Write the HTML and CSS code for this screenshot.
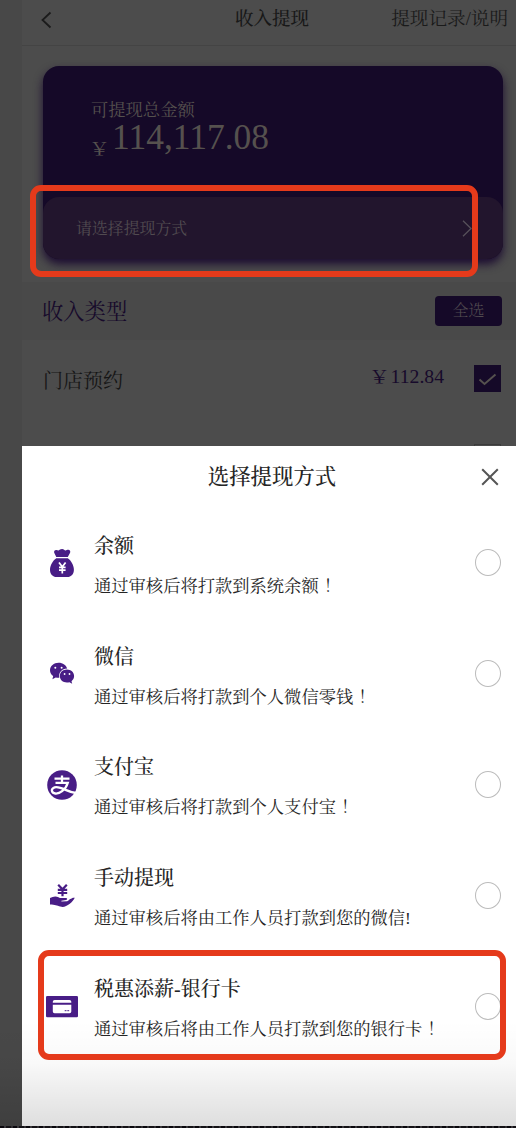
FILE: index.html
```html
<!DOCTYPE html>
<html lang="zh-CN">
<head>
<meta charset="utf-8">
<title>收入提现</title>
<link rel="stylesheet" href="styles.css">
</head>
<body>
<div class="screen">
  <div class="page">
    <header class="nav">
      <svg class="back" width="12" height="18" viewBox="0 0 12 18"><path d="M9.5 1.5 1.5 9l8 7.5"/></svg>
      <h1 class="nav-title">收入提现</h1>
      <span class="nav-link">提现记录/说明</span>
    </header>
    <section class="card">
      <div class="balance">
        <div class="balance-label">可提现总金额</div>
        <div class="balance-row"><span class="yen">￥</span><span class="amount">114,117.08</span></div>
      </div>
      <div class="method">
        <span>请选择提现方式</span>
        <svg width="10" height="17" viewBox="0 0 10 17"><path d="M1 .8 9 8.5 1 16.2"/></svg>
      </div>
    </section>
    <div class="type-bar">
      <h2 class="type-title">收入类型</h2>
      <span class="all">全选</span>
    </div>
    <div class="type-row">
      <span class="type-name">门店预约</span>
      <span class="type-price"><span class="price-yen">￥</span><span>112.84</span></span>
      <span class="check"><svg width="27" height="27" viewBox="0 0 27 27"><path d="m5.500 14.500 5 4.500 11-9.500"/></svg></span>
    </div>
    <div class="type-row next"><span class="check empty"></span></div>
  </div>

  <section class="sheet">
    <header class="sheet-head">
      <h2>选择提现方式</h2>
      <svg class="close" width="18" height="18" viewBox="0 0 18 18"><path d="m1.200 1.200 15.600 15.600M16.800 1.200 1.200 16.800"/></svg>
    </header>
    <ul class="options">
      <li class="option">
        <svg class="icon" width="32" height="32" viewBox="0 0 32 32">
          <path class="fill" d="M10.300 10 8.200 5.800C7.700 4 8.900 2.800 10.400 3c.9.100 1.500.5 2.100.4C13.700 3.200 14.200 2 16.100 2c1.800 0 2.300 1.300 3.400 1.400.8.100 1.500-.6 2.800-.6 1.600 0 2.400 1.400 1.800 2.900L21.800 10Z"/>
          <path class="fill" d="M10.300 11.200h11.500c3.300 2.200 6.100 7.200 6.100 11.500 0 4.200-2.600 7.300-6.600 7.300H10.700C6.600 30 4 26.900 4 22.700c0-4.300 2.900-9.300 6.300-11.500Z"/>
          <path class="cut" d="m13 15.500 3.300 4.300 3.300-4.300M16.300 19.800v6.600M13 20.300h6.600M13 23.200h6.600"/>
        </svg>
        <div class="info"><h3>余额</h3><p>通过审核后将打款到系统余额<span class="mid">！</span></p></div>
        <span class="radio"></span>
      </li>
      <li class="option">
        <svg class="icon" width="32" height="32" viewBox="0 0 32 32">
          <path class="fill" d="M12.600 4.700C7.800 4.700 4 8 4 12.200c0 2.400 1.200 4.500 3.200 5.900l-.8 3.200 3.300-1.900c1.200.3 2.300.5 3.600.4-1.100-5.300 3-9.300 7.900-9.200-.9-3.400-4.300-5.900-8.600-5.900Z"/>
          <path class="fill" d="M20.900 11.600c-4 0-7.100 2.800-7.100 6.500s3.100 6.500 7.100 6.500c.8 0 1.800-.2 2.600-.4l2.700 1.500-.7-2.500c1.600-1.200 2.600-3 2.600-5.100 0-3.700-3.200-6.500-7.200-6.500Z"/>
          <g class="hole"><circle cx="9.300" cy="9.800" r="1"/><circle cx="15.600" cy="9.800" r="1"/><circle cx="18.600" cy="16" r=".9"/><circle cx="23.500" cy="16" r=".9"/></g>
        </svg>
        <div class="info"><h3>微信</h3><p>通过审核后将打款到个人微信零钱<span class="mid">！</span></p></div>
        <span class="radio"></span>
      </li>
      <li class="option">
        <svg class="icon" width="32" height="32" viewBox="0 0 32 32">
          <circle class="fill" cx="16" cy="16" r="14.800"/>
          <path class="mark" d="M8.500 9.600h15M16 6.500v7.300M9.500 13.800h12.300c-1 3.500-3.100 6.400-5.700 8.400-2.400 1.900-4.700 2.500-6.800 2.300-3.700-.4-4.500-4-1.900-5.600 3.200-2 8 .1 12.200 2 3.300 1.500 6.900 2.800 10.500 3.100"/>
        </svg>
        <div class="info"><h3>支付宝</h3><p>通过审核后将打款到个人支付宝<span class="mid">！</span></p></div>
        <span class="radio"></span>
      </li>
      <li class="option">
        <svg class="icon" width="32" height="32" viewBox="0 0 32 32">
          <path class="coin" d="m12.200 4.800 4.300 4.500 4.300-4.500M16.500 9v7.300M11.800 9.800h9.400M11.800 13h9.400"/>
          <path class="fill" d="M4 18c3-1.700 6-2 8.500-.8 1.200.6 1.900.9 3.500.9h3.900c1.700 0 1.700 1.800.2 2l-4.700.7v.6l5.800-.2c1.200-.2 2-1.400 3-2.100 1.500-1.100 3.200-1.800 4.600-1.300-1.300 2.200-2.800 4.400-5 6-3.400 2.600-6.400 4-9.500 2.800-3.300-1.200-5.300-2.200-10.300-2.200Z"/>
        </svg>
        <div class="info"><h3>手动提现</h3><p>通过审核后将由工作人员打款到您的微信!</p></div>
        <span class="radio"></span>
      </li>
      <li class="option">
        <svg class="icon" width="32" height="32" viewBox="0 0 32 32">
          <rect class="fill" y="5" width="32" height="21.300" rx="1.300"/>
          <path class="hole" d="M8.600 9h14.900q1.800 0 1.800 1.700v1.100H6.800v-1.100Q6.800 9 8.600 9ZM6.800 13.700h18.500v6.700q0 1.800-1.800 1.800H8.600q-1.800 0-1.800-1.800Z"/>
          <path class="dots" d="M18.700 19.700h1.800M21.300 19.700h1.900"/>
        </svg>
        <div class="info"><h3>税惠添薪-银行卡</h3><p>通过审核后将由工作人员打款到您的银行卡<span class="mid">！</span></p></div>
        <span class="radio"></span>
      </li>
    </ul>
  </section>

  <div class="shade"></div>
  <div class="bottom-edge"></div>
  <div class="mark-box mark-method"></div>
  <div class="mark-box mark-bank"></div>
</div>
</body>
</html>
```
FILE: styles.css
```css
* { box-sizing: border-box; margin: 0; padding: 0; }
body {
  width: 516px;
  height: 1128px;
  overflow: hidden;
  font-family: "Liberation Serif", "Songti SC", "Noto Serif CJK SC", "Noto Sans CJK SC", serif;
  font-weight: 400;
  white-space: nowrap;
  -webkit-font-smoothing: antialiased;
}
h1, h2, h3 { font-weight: 400; }
svg { display: block; fill: none; flex: none; }
.screen { position: relative; height: 1128px; padding-left: 22px; background: #484848; overflow: hidden; }
.page { height: 1126px; background: #4c4c4c; }

.nav {
  display: grid;
  grid-template-columns: 1fr auto 1fr;
  align-items: center;
  height: 46px;
  padding: 0 8px 8px 19px;
  border-bottom: 1px solid #444;
}
.back { stroke: #1b1b1b; stroke-width: 1.8; margin-top: 2px; }
.nav-title { font-size: 18.5px; line-height: 24px; color: #181818; margin: 1px 0 0 -5px; font-weight: 500; }
.nav-link { font-size: 18.6px; line-height: 24px; color: #1a1a1a; justify-self: end; margin-top: 1px; }

.card {
  height: 193px;
  margin: 20px 13px 0 21px;
  border-radius: 16px;
  background: #150928;
  box-shadow: 0 5px 10px #1b0b30;
  display: flex;
  flex-direction: column;
}
.balance { height: 131px; padding: 34px 0 0 48px; color: #55514e; }
.balance-label { font-size: 17.3px; line-height: 22px; }
.balance-row { display: flex; align-items: baseline; height: 40px; margin-top: -5px; }
.yen {
  width: 21px;
  font-size: 17px;
  line-height: 40px;
  position: relative;
  top: 6px;
  transform: scaleX(1.25);
  transform-origin: 9px 50%;
}
.amount { font-size: 35.5px; line-height: 40px; }
.method {
  height: 62px;
  padding: 0 31px 0 33px;
  border-radius: 16px;
  background: #22152d;
  color: #514b50;
  font-size: 15.9px;
  display: flex;
  align-items: center;
  justify-content: space-between;
}
.method span { margin-top: -2px; }
.method svg { stroke: #57515a; stroke-width: 1.3; }

.type-bar {
  height: 58px;
  margin-top: 23px;
  padding: 0 14px 0 20px;
  background: #494949;
  display: flex;
  align-items: center;
  justify-content: space-between;
}
.type-title { font-size: 21.3px; line-height: 26px; color: #170a2b; margin-top: 2px; }
.all {
  width: 67px;
  height: 30px;
  border-radius: 4px;
  background: #150928;
  color: #514b50;
  font-size: 16px;
  font-weight: 300;
  line-height: 29px;
  text-align: center;
}
.type-row { display: flex; align-items: center; height: 77px; padding: 0 15px 0 21px; }
.type-name { font-size: 20px; color: #161616; margin-top: 2px; }
.type-price { font-size: 19.7px; line-height: 26px; color: #170a2b; margin: -4px 30px 0 auto; display: flex; align-items: baseline; }
.price-yen { width: 20px; font-size: 17px; transform: scaleX(1.25); transform-origin: 9px 50%; }
.check { width: 27px; height: 27px; background: #150928; }
.check svg { stroke: #55514e; stroke-width: 2; }
.next { justify-content: flex-end; align-items: flex-start; margin-top: 27px; }
.empty { background: none; border: 1px solid #3b3b3b; }

.sheet { position: absolute; left: 22px; top: 446px; width: 494px; height: 680px; background: #fff; color: #252525; }
.sheet-head { display: grid; grid-template-columns: 1fr auto 1fr; align-items: center; height: 60px; padding: 1px 17px 0 23px; }
.sheet-head h2 { grid-column: 2; font-size: 21.4px; line-height: 28px; font-weight: 500; }
.close { justify-self: end; stroke: #555; stroke-width: 2; }
.options { list-style: none; padding-top: 2px; }
.option { display: flex; align-items: center; height: 110.8px; padding: 0 15px 0 24px; }
.icon .fill { fill: #481d86; }
.icon .hole { fill: #fff; }
.icon .cut { stroke: #fff; stroke-width: 1.7; }
.icon .mark { stroke: #fff; stroke-width: 2.3; }
.icon .coin { stroke: #481d86; stroke-width: 2.2; }
.icon .dots { stroke: #481d86; stroke-width: 1; }
.info { margin-left: 16px; padding-top: 4px; flex: 1; }
.info h3 { font-size: 20px; line-height: 30px; font-weight: 500; }
.info p { font-size: 17.3px; line-height: 26px; margin-top: 13px; }
.mid { margin-left: 5px; }
.radio { width: 26px; height: 27px; margin-top: -1px; border: 1px solid #bcbcbc; border-radius: 50%; background: #fff; }

.shade {
  position: absolute;
  left: 0;
  right: 0;
  top: 1020px;
  height: 106px;
  background: linear-gradient(rgba(0,0,0,0), rgba(0,0,0,.025) 40%, rgba(0,0,0,.13));
}
.bottom-edge {
  position: absolute;
  left: 0;
  right: 0;
  top: 1126px;
  height: 2px;
  background: repeating-linear-gradient(90deg, #09070c 0 4px, #38363a 4px 6px, #141216 6px 11px, #302e32 11px 13px);
}
.mark-box { position: absolute; border: 6px solid #e53a1b; border-radius: 11px; }
.mark-method { left: 30px; top: 185px; width: 448px; height: 92px; }
.mark-bank { left: 38px; top: 950px; width: 468px; height: 110px; }
```
